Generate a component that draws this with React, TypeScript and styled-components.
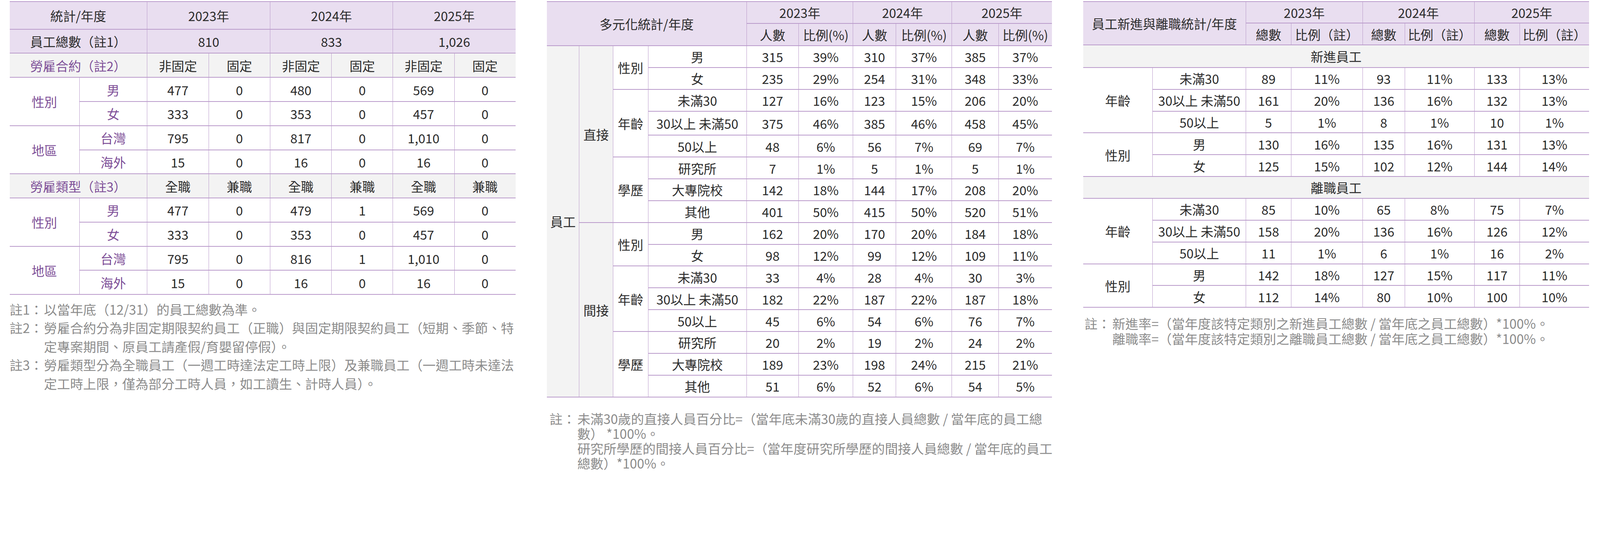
import React from "react";
import styled, { createGlobalStyle } from "styled-components";

// 1rem = 10 screenshot pixels, whatever the viewport's CSS width is
const GlobalStyle = createGlobalStyle`
  html {
    font-size: calc(1000vw / 4839);
    overflow: hidden;
  }
  html, body {
    margin: 0;
    padding: 0;
    background: #ffffff;
  }
  body {
    font-family: "Noto Sans CJK TC", "Noto Sans", sans-serif;
    color: #2b2b2b;
  }
`;

const LINE = "#ba9bcb";
const HEAD_BG = "#e9def0";
const GRAY_BG = "#f3f3f3";
const PURPLE = "#7e4f98";

const Page = styled.div`
  display: grid;
  grid-template-columns: 153rem 152.7rem 153rem;
  column-gap: 9.5rem;
  align-items: start;
  padding: 0.3rem 0 0 2.9rem;
`;

const Block = styled.div`
  display: flex;
  flex-direction: column;
`;

const Table = styled.table`
  width: 100%;
  border-collapse: collapse;
  table-layout: fixed;
  border-top: 0.3rem solid ${LINE};
  border-bottom: 0.3rem solid ${LINE};
  border-left: hidden;
  border-right: hidden;
  font-size: 3.85rem;
  line-height: 1.2;
`;

const Col = styled.col<{ $w: number }>`
  width: ${(p) => p.$w / 10}rem;
`;

const Row = styled.tr<{ $h: number }>`
  height: ${(p) => p.$h / 10}rem;
`;

type Bg = "head" | "gray" | "white";

const Cell = styled.td<{ $bg?: Bg; $purple?: boolean }>`
  padding: 0;
  text-align: center;
  vertical-align: middle;
  white-space: nowrap;
  border-left: 0.2rem solid ${LINE};
  border-right: 0.2rem solid ${LINE};
  border-top: 0.3rem solid ${LINE};
  border-bottom: 0.3rem solid ${LINE};
  background: ${(p) =>
    p.$bg === "head" ? HEAD_BG : p.$bg === "gray" ? GRAY_BG : "#ffffff"};
  color: ${(p) => (p.$purple ? PURPLE : "#2b2b2b")};
`;

const Notes = styled.div<{ $mt: number; $lh: number; $pl: number }>`
  margin-top: ${(p) => p.$mt / 10}rem;
  padding-left: ${(p) => p.$pl / 10}rem;
  font-size: 3.95rem;
  line-height: ${(p) => p.$lh / 10}rem;
  color: #8c8c8c;
`;

const NoteRow = styled.div`
  display: flex;
`;

const NoteLabel = styled.span<{ $w: number }>`
  flex: none;
  width: ${(p) => p.$w / 10}rem;
  white-space: nowrap;
`;

const NoteText = styled.div`
  flex: 1;
  white-space: nowrap;
`;

const NotePara = styled.p`
  margin: 0;
`;

/* ---------- 勞雇 table ---------- */

type Group = { name: string; rows: [string, string[]][] };

const contractGroups: Group[] = [
  {
    name: "性別",
    rows: [
      ["男", ["477", "0", "480", "0", "569", "0"]],
      ["女", ["333", "0", "353", "0", "457", "0"]],
    ],
  },
  {
    name: "地區",
    rows: [
      ["台灣", ["795", "0", "817", "0", "1,010", "0"]],
      ["海外", ["15", "0", "16", "0", "16", "0"]],
    ],
  },
];

const typeGroups: Group[] = [
  {
    name: "性別",
    rows: [
      ["男", ["477", "0", "479", "1", "569", "0"]],
      ["女", ["333", "0", "353", "0", "457", "0"]],
    ],
  },
  {
    name: "地區",
    rows: [
      ["台灣", ["795", "0", "816", "1", "1,010", "0"]],
      ["海外", ["15", "0", "16", "0", "16", "0"]],
    ],
  },
];

const YEARS = ["2023年", "2024年", "2025年"];

const PurpleGroups = ({ groups, h }: { groups: Group[]; h: number }) => (
  <>
    {groups.map((g) =>
      g.rows.map(([label, vals], i) => (
        <Row $h={h} key={g.name + label}>
          {i === 0 && (
            <Cell $purple rowSpan={g.rows.length}>
              {g.name}
            </Cell>
          )}
          <Cell $purple>{label}</Cell>
          {vals.map((v, j) => (
            <Cell key={j}>{v}</Cell>
          ))}
        </Row>
      ))
    )}
  </>
);

const SectionRow = ({ label, a, b }: { label: string; a: string; b: string }) => (
  <Row $h={73}>
    <Cell $bg="gray" $purple colSpan={2}>
      {label}
    </Cell>
    {YEARS.map((y) => (
      <React.Fragment key={y}>
        <Cell $bg="gray">{a}</Cell>
        <Cell $bg="gray">{b}</Cell>
      </React.Fragment>
    ))}
  </Row>
);

const EmploymentTable = () => (
  <Block>
    <Table>
      <colgroup>
        {[211, 205, 186, 186, 186, 185, 186, 185].map((w, i) => (
          <Col key={i} $w={w} />
        ))}
      </colgroup>
      <tbody>
        <Row $h={84}>
          <Cell $bg="head" colSpan={2}>
            統計/年度
          </Cell>
          {YEARS.map((y) => (
            <Cell $bg="head" colSpan={2} key={y}>
              {y}
            </Cell>
          ))}
        </Row>
        <Row $h={73}>
          <Cell $bg="head" colSpan={2}>
            員工總數（註1）
          </Cell>
          {["810", "833", "1,026"].map((v) => (
            <Cell $bg="head" colSpan={2} key={v}>
              {v}
            </Cell>
          ))}
        </Row>
        <SectionRow label="勞雇合約（註2）" a="非固定" b="固定" />
        <PurpleGroups groups={contractGroups} h={73} />
        <SectionRow label="勞雇類型（註3）" a="全職" b="兼職" />
        <PurpleGroups groups={typeGroups} h={73} />
      </tbody>
    </Table>
    <Notes $mt={15} $lh={56} $pl={0}>
      <NoteRow>
        <NoteLabel $w={104}>註1：</NoteLabel>
        <NoteText>以當年底（12/31）的員工總數為準。</NoteText>
      </NoteRow>
      <NoteRow>
        <NoteLabel $w={104}>註2：</NoteLabel>
        <NoteText>
          勞雇合約分為非固定期限契約員工（正職）與固定期限契約員工（短期、季節、特
          <br />
          定專案期間、原員工請產假/育嬰留停假）。
        </NoteText>
      </NoteRow>
      <NoteRow>
        <NoteLabel $w={104}>註3：</NoteLabel>
        <NoteText>
          勞雇類型分為全職員工（一週工時達法定工時上限）及兼職員工（一週工時未達法
          <br />
          定工時上限，僅為部分工時人員，如工讀生、計時人員）。
        </NoteText>
      </NoteRow>
    </Notes>
  </Block>
);

/* ---------- 多元化 table ---------- */

type SubGroup = { name: string; rows: [string, string[], number?][] };

const direct: SubGroup[] = [
  {
    name: "性別",
    rows: [
      ["男", ["315", "39%", "310", "37%", "385", "37%"]],
      ["女", ["235", "29%", "254", "31%", "348", "33%"]],
    ],
  },
  {
    name: "年齡",
    rows: [
      ["未滿30", ["127", "16%", "123", "15%", "206", "20%"]],
      ["30以上 未滿50", ["375", "46%", "385", "46%", "458", "45%"], 73],
      ["50以上", ["48", "6%", "56", "7%", "69", "7%"]],
    ],
  },
  {
    name: "學歷",
    rows: [
      ["研究所", ["7", "1%", "5", "1%", "5", "1%"]],
      ["大專院校", ["142", "18%", "144", "17%", "208", "20%"]],
      ["其他", ["401", "50%", "415", "50%", "520", "51%"]],
    ],
  },
];

const indirect: SubGroup[] = [
  {
    name: "性別",
    rows: [
      ["男", ["162", "20%", "170", "20%", "184", "18%"]],
      ["女", ["98", "12%", "99", "12%", "109", "11%"]],
    ],
  },
  {
    name: "年齡",
    rows: [
      ["未滿30", ["33", "4%", "28", "4%", "30", "3%"]],
      ["30以上 未滿50", ["182", "22%", "187", "22%", "187", "18%"]],
      ["50以上", ["45", "6%", "54", "6%", "76", "7%"]],
    ],
  },
  {
    name: "學歷",
    rows: [
      ["研究所", ["20", "2%", "19", "2%", "24", "2%"]],
      ["大專院校", ["189", "23%", "198", "24%", "215", "21%"]],
      ["其他", ["51", "6%", "52", "6%", "54", "5%"]],
    ],
  },
];

const countRows = (gs: SubGroup[]) => gs.reduce((n, g) => n + g.rows.length, 0);

const DiversityBody = () => {
  const parts: [string, SubGroup[]][] = [
    ["直接", direct],
    ["間接", indirect],
  ];
  const total = countRows(direct) + countRows(indirect);
  return (
    <>
      {parts.map(([kind, groups], pi) =>
        groups.map((g, gi) =>
          g.rows.map(([label, vals, h], ri) => (
            <Row $h={h ?? 66} key={kind + g.name + label}>
              {pi === 0 && gi === 0 && ri === 0 && (
                <Cell $bg="gray" rowSpan={total}>
                  員工
                </Cell>
              )}
              {gi === 0 && ri === 0 && (
                <Cell $bg="gray" rowSpan={countRows(groups)}>
                  {kind}
                </Cell>
              )}
              {ri === 0 && <Cell rowSpan={g.rows.length}>{g.name}</Cell>}
              <Cell>{label}</Cell>
              {vals.map((v, j) => (
                <Cell key={j}>{v}</Cell>
              ))}
            </Row>
          ))
        )
      )}
    </>
  );
};

const DiversityTable = () => (
  <Block>
    <Table>
      <colgroup>
        {[98, 102, 106, 298, 157, 165, 130, 169, 141, 161].map((w, i) => (
          <Col key={i} $w={w} />
        ))}
      </colgroup>
      <tbody>
        <Row $h={67}>
          <Cell $bg="head" colSpan={4} rowSpan={2}>
            多元化統計/年度
          </Cell>
          {YEARS.map((y) => (
            <Cell $bg="head" colSpan={2} key={y}>
              {y}
            </Cell>
          ))}
        </Row>
        <Row $h={67}>
          {YEARS.map((y) => (
            <React.Fragment key={y}>
              <Cell $bg="head">人數</Cell>
              <Cell $bg="head">比例(%)</Cell>
            </React.Fragment>
          ))}
        </Row>
        <DiversityBody />
      </tbody>
    </Table>
    <Notes $mt={42} $lh={45} $pl={8}>
      <NoteRow>
        <NoteLabel $w={84}>註：</NoteLabel>
        <NoteText>
          <NotePara>
            未滿30歲的直接人員百分比=（當年底未滿30歲的直接人員總數 / 當年底的員工總
            <br />
            數） *100%。
          </NotePara>
          <NotePara>
            研究所學歷的間接人員百分比=（當年度研究所學歷的間接人員總數 / 當年底的員工
            <br />
            總數）*100%。
          </NotePara>
        </NoteText>
      </NoteRow>
    </Notes>
  </Block>
);

/* ---------- 新進與離職 table ---------- */

const hires: SubGroup[] = [
  {
    name: "年齡",
    rows: [
      ["未滿30", ["89", "11%", "93", "11%", "133", "13%"]],
      ["30以上 未滿50", ["161", "20%", "136", "16%", "132", "13%"]],
      ["50以上", ["5", "1%", "8", "1%", "10", "1%"]],
    ],
  },
  {
    name: "性別",
    rows: [
      ["男", ["130", "16%", "135", "16%", "131", "13%"]],
      ["女", ["125", "15%", "102", "12%", "144", "14%"]],
    ],
  },
];

const leavers: SubGroup[] = [
  {
    name: "年齡",
    rows: [
      ["未滿30", ["85", "10%", "65", "8%", "75", "7%"]],
      ["30以上 未滿50", ["158", "20%", "136", "16%", "126", "12%"]],
      ["50以上", ["11", "1%", "6", "1%", "16", "2%"]],
    ],
  },
  {
    name: "性別",
    rows: [
      ["男", ["142", "18%", "127", "15%", "117", "11%"]],
      ["女", ["112", "14%", "80", "10%", "100", "10%"]],
    ],
  },
];

const TurnoverSection = ({ title, groups, h }: { title: string; groups: SubGroup[]; h: number }) => (
  <>
    <Row $h={h}>
      <Cell $bg="gray" colSpan={8}>
        {title}
      </Cell>
    </Row>
    {groups.map((g) =>
      g.rows.map(([label, vals], ri) => (
        <Row $h={66} key={g.name + label}>
          {ri === 0 && <Cell rowSpan={g.rows.length}>{g.name}</Cell>}
          <Cell>{label}</Cell>
          {vals.map((v, j) => (
            <Cell key={j}>{v}</Cell>
          ))}
        </Row>
      ))
    )}
  </>
);

const TurnoverTable = () => (
  <Block>
    <Table>
      <colgroup>
        {[210, 282, 137, 216, 128, 210, 137, 210].map((w, i) => (
          <Col key={i} $w={w} />
        ))}
      </colgroup>
      <tbody>
        <Row $h={66}>
          <Cell $bg="head" colSpan={2} rowSpan={2}>
            員工新進與離職統計/年度
          </Cell>
          {YEARS.map((y) => (
            <Cell $bg="head" colSpan={2} key={y}>
              {y}
            </Cell>
          ))}
        </Row>
        <Row $h={66}>
          {YEARS.map((y) => (
            <React.Fragment key={y}>
              <Cell $bg="head">總數</Cell>
              <Cell $bg="head">比例（註）</Cell>
            </React.Fragment>
          ))}
        </Row>
        <TurnoverSection title="新進員工" groups={hires} h={68} />
        <TurnoverSection title="離職員工" groups={leavers} h={66} />
      </tbody>
    </Table>
    <Notes $mt={25} $lh={45} $pl={4}>
      <NoteRow>
        <NoteLabel $w={84}>註：</NoteLabel>
        <NoteText>
          <NotePara>新進率=（當年度該特定類別之新進員工總數 / 當年底之員工總數）*100%。</NotePara>
          <NotePara>離職率=（當年度該特定類別之離職員工總數 / 當年底之員工總數）*100%。</NotePara>
        </NoteText>
      </NoteRow>
    </Notes>
  </Block>
);

export default function App() {
  return (
    <>
      <GlobalStyle />
      <Page>
        <EmploymentTable />
        <DiversityTable />
        <TurnoverTable />
      </Page>
    </>
  );
}
